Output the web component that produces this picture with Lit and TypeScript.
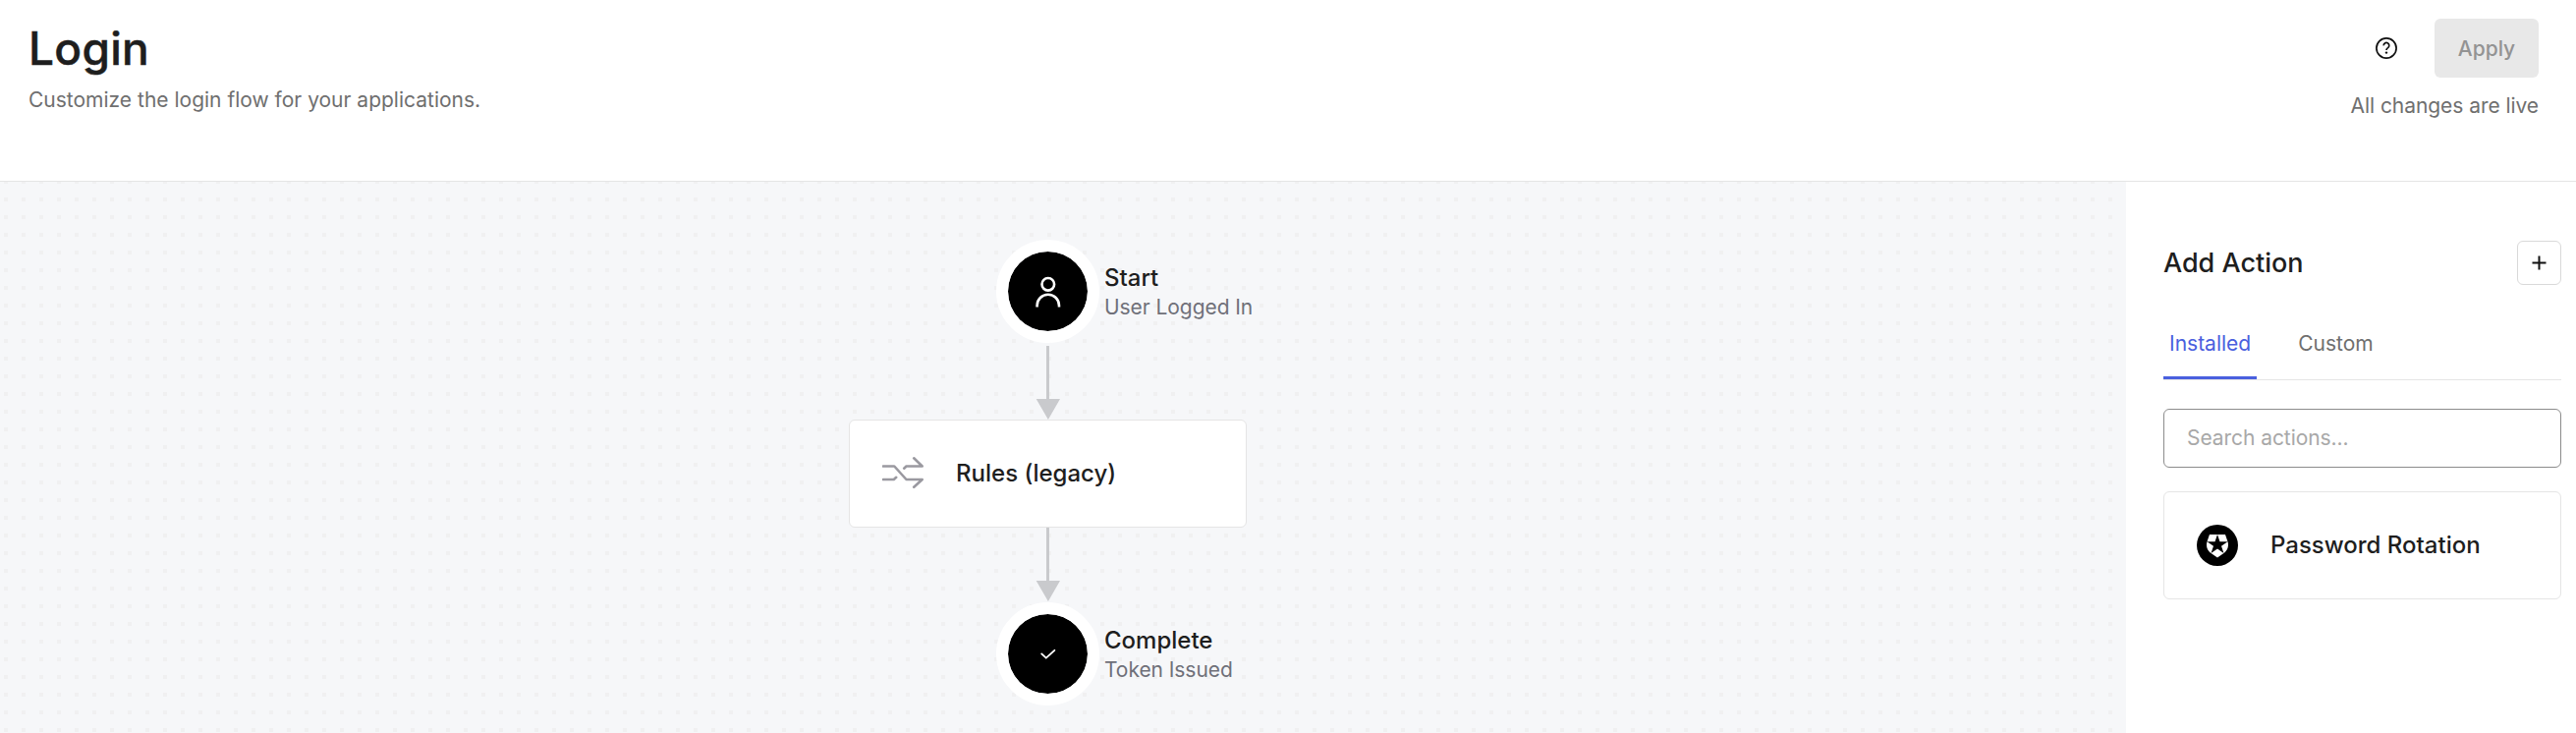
import { LitElement, html, css, svg } from 'lit';
import { customElement, property, state } from 'lit/decorators.js';
import { classMap } from 'lit/directives/class-map.js';

const userIcon = svg`
  <svg width="36" height="36" viewBox="0 0 36 36" fill="none" stroke="#fff" stroke-width="2.6">
    <circle cx="17.8" cy="10.3" r="6.3" />
    <path d="M6.6 33.6v-1.7a11.2 11.2 0 0 1 22.4 0v1.7" />
  </svg>`;

const checkIcon = svg`
  <svg width="24" height="24" viewBox="0 0 24 24" fill="none" stroke="#fff" stroke-width="1.8" stroke-linecap="round" stroke-linejoin="round">
    <path d="M5.2 11.4l4.6 4.3 8.6-7.9" />
  </svg>`;

@customElement('flow-node')
export class FlowNode extends LitElement {
  @property({ type: String }) name = '';
  @property({ type: String }) detail = '';
  @property({ type: String }) icon = 'user';

  static get styles() {
    return css`
      :host {
        display: grid;
        grid-template-columns: 1fr 105px 1fr;
        align-items: center;
        width: 100%;
      }

      .circle {
        display: flex;
        align-items: center;
        justify-content: center;
        box-sizing: border-box;
        grid-column: 2;
        width: 105px;
        height: 105px;
        border: 12px solid #fff;
        border-radius: 50%;
        background: #000;
        background-clip: padding-box;
      }

      .label {
        padding: 2px 0 0 5px;
        white-space: nowrap;
      }

      .name {
        font-size: 24px;
        font-weight: 500;
        line-height: 29px;
        color: #1e1e1e;
      }

      .detail {
        font-size: 21px;
        line-height: 31px;
        letter-spacing: -0.06px;
        color: #6f7079;
      }
    `;
  }

  render() {
    return html`
      <div class="circle">${this.icon === 'user' ? userIcon : checkIcon}</div>
      <div class="label">
        <div class="name">${this.name}</div>
        <div class="detail">${this.detail}</div>
      </div>
    `;
  }
}

@customElement('flow-arrow')
export class FlowArrow extends LitElement {
  static get styles() {
    return css`
      :host {
        display: block;
        height: 75px;
      }

      svg {
        display: block;
      }
    `;
  }

  render() {
    return html`
      <svg width="25" height="75" viewBox="0 0 25 75" fill="#c9cacd">
        <path d="M11 0h3v54h-3zM.7 54H25L12.9 75z" />
      </svg>
    `;
  }
}

@customElement('action-card')
export class ActionCard extends LitElement {
  @property({ type: String }) name = '';

  static get styles() {
    return css`
      :host {
        display: flex;
        align-items: center;
        box-sizing: border-box;
        width: 405px;
        height: 110px;
        padding-left: 33px;
        border: 1px solid #e5e5e5;
        border-radius: 6px;
        background: #fff;
        gap: 33px;
      }

      .name {
        font-size: 24px;
        font-weight: 500;
        line-height: 30px;
        color: #1e1e1e;
        white-space: nowrap;
      }
    `;
  }

  render() {
    return html`
      <slot></slot>
      <div class="name">${this.name}</div>
    `;
  }
}

@customElement('app-root')
export class AppRoot extends LitElement {
  @state() tab = 'Installed';

  static get styles() {
    return css`
      :host {
        display: flex;
        flex-direction: column;
        height: 746px;
        overflow: hidden;
        background: #fff;
        font-family: Inter, 'Liberation Sans', sans-serif;
        color: #1e1e1e;
      }

      svg {
        display: block;
      }

      .header {
        display: flex;
        justify-content: space-between;
        box-sizing: border-box;
        height: 185px;
        padding: 19px 38px 0 29px;
        border-bottom: 1px solid #e5e5e5;
      }

      .title {
        margin: 2px 0 9px;
        font-size: 46px;
        font-weight: 500;
        line-height: 56px;
        letter-spacing: 0.3px;
        -webkit-text-stroke: 0.5px #1e1e1e;
      }

      .subtitle,
      .status {
        font-size: 21px;
        line-height: 32px;
        color: #6f6f6f;
      }

      .status {
        letter-spacing: -0.06px;
      }

      .side {
        display: flex;
        flex-direction: column;
        align-items: flex-end;
        gap: 13px;
      }

      .controls {
        display: flex;
        align-items: center;
        gap: 38px;
      }

      .apply {
        width: 106px;
        height: 60px;
        padding: 0;
        border: none;
        border-radius: 6px;
        background: #e8e8e8;
        font: 500 21px Inter, sans-serif;
        color: #939393;
      }

      .main {
        display: flex;
        flex: 1;
        min-height: 0;
      }

      .canvas {
        display: flex;
        flex: 1;
        flex-direction: column;
        align-items: center;
        padding: 59px 31px 0 0;
        background-color: #f6f7f9;
        background-image: conic-gradient(from 90deg at 14px 14px, #f0f0f1 25%, transparent 0);
        background-size: 18px 18px;
        background-position: -10px 2px;
      }

      .after-start {
        margin-top: 3px;
      }

      .end {
        margin-top: 1px;
      }

      .panel {
        box-sizing: border-box;
        width: 458px;
        padding: 60px 15px 0 38px;
      }

      .panel-head {
        display: flex;
        align-items: center;
        justify-content: space-between;
      }

      .panel-title {
        margin: 0;
        font-size: 27px;
        font-weight: 500;
        line-height: 36px;
      }

      .add {
        display: flex;
        align-items: center;
        justify-content: center;
        width: 45px;
        height: 45px;
        padding: 0;
        border: 1px solid #d9d9d9;
        border-radius: 6px;
        background: #fff;
      }

      .tabs {
        display: flex;
        gap: 36px;
        margin-top: 44px;
        border-bottom: 1px solid #e5e5e5;
      }

      .tab {
        padding: 0 6px 17px;
        border-bottom: 3px solid transparent;
        font-size: 21px;
        line-height: 32px;
        color: #6f6f6f;
        cursor: pointer;
      }

      .tab.active {
        border-color: #4a60de;
        color: #4a60de;
      }

      .search {
        display: block;
        box-sizing: border-box;
        width: 100%;
        height: 60px;
        margin: 29px 0 24px;
        padding: 0 22px 1px 23px;
        border: 1px solid #8c8c8c;
        border-radius: 6px;
        outline: none;
        font: 21px Inter, sans-serif;
        letter-spacing: -0.06px;
      }

      .search::placeholder {
        color: #a8a8a8;
        opacity: 1;
      }
    `;
  }

  render() {
    return html`
      <header class="header">
        <div>
          <h1 class="title">Login</h1>
          <div class="subtitle">Customize the login flow for your applications.</div>
        </div>
        <div class="side">
          <div class="controls">
            <svg width="22" height="22" viewBox="0 0 22 22" fill="none" stroke="#111" stroke-width="1.7">
              <circle cx="11" cy="11" r="10.1" />
              <path d="M8.2 8.4a2.8 2.8 0 1 1 4.4 2.2c-1 .7-1.6 1.1-1.6 2.3" />
              <circle cx="11" cy="15.6" r="1.2" fill="#111" stroke="none" />
            </svg>
            <button class="apply" disabled>Apply</button>
          </div>
          <div class="status">All changes are live</div>
        </div>
      </header>
      <main class="main">
        <section class="canvas">
          <flow-node name="Start" detail="User Logged In" icon="user"></flow-node>
          <flow-arrow class="after-start"></flow-arrow>
          <action-card name="Rules (legacy)">
            <svg width="42" height="36" viewBox="0 0 42 36" fill="none" stroke="#9a99a0" stroke-width="2.6" stroke-linecap="round" stroke-linejoin="round">
              <path d="M.9 10.5h11.4L24.5 24h16.2l-8.5 7.7" />
              <path d="M.9 24h10.9l2.4-2.2M22.2 12.7l2.3-2.2h16.2l-8.5-8.2" />
            </svg>
          </action-card>
          <flow-arrow></flow-arrow>
          <flow-node class="end" name="Complete" detail="Token Issued" icon="check"></flow-node>
        </section>
        <aside class="panel">
          <div class="panel-head">
            <h2 class="panel-title">Add Action</h2>
            <button class="add" aria-label="Add">
              <svg width="15" height="15" viewBox="0 0 15 15" stroke="#111" stroke-width="2">
                <path d="M7.5 .5v14M.5 7.5h14" />
              </svg>
            </button>
          </div>
          <div class="tabs">${['Installed', 'Custom'].map((name) => this.renderTab(name))}</div>
          <input class="search" placeholder="Search actions..." />
          <action-card name="Password Rotation">
            <svg width="42" height="42" viewBox="0 0 42 42">
              <circle cx="21" cy="21" r="21" />
              <path
                fill="#fff"
                transform="translate(8.4 10) scale(1.05 .98)"
                d="M21.98 7.448L19.62 0H4.347L2.02 7.448c-1.352 4.312.03 9.206 3.815 12.015L12.007 24l6.157-4.552c3.755-2.81 5.182-7.688 3.815-12.015l-6.16 4.58 2.343 7.45-6.157-4.597-6.158 4.58 2.358-7.433-6.188-4.55 7.63-.045L12.008 0l2.356 7.404 7.615.044z"
              />
            </svg>
          </action-card>
        </aside>
      </main>
    `;
  }

  renderTab(name: string) {
    return html`
      <div class=${classMap({ tab: true, active: this.tab === name })} @click=${() => (this.tab = name)}>${name}</div>
    `;
  }
}
